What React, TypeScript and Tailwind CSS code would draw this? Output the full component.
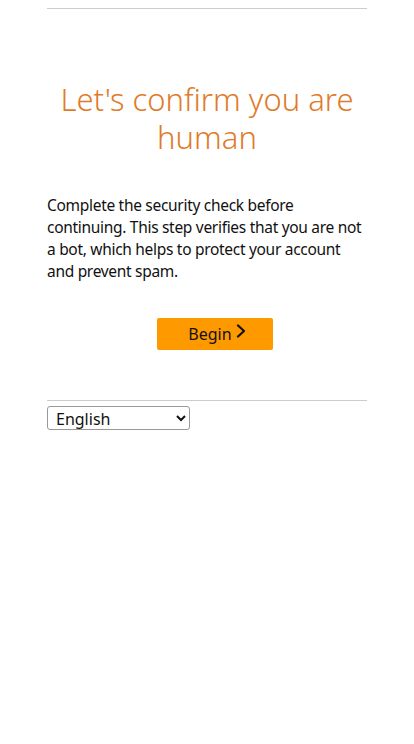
const App = () => {
  return (
    <div className="min-h-[744px] bg-white font-['Noto_Sans',sans-serif] text-[#111]">
      <div className="mx-auto w-[320px] pt-2">
        <hr className="border-t border-t-[#cccccc]" />
        <h1 className="mt-[71px] text-center text-[31px] font-light leading-[38px] text-[#e07b2a]">
          Let's confirm you are human
        </h1>
        <p className="mt-[38px] text-[15.5px] leading-[22px] tracking-[-0.3px]">
          Complete the security check before continuing. This step verifies that you are not a bot, which helps to protect your account and prevent spam.
        </p>
        <div className="mt-[36px] flex justify-center pl-[16px]">
          <button className="flex h-8 w-[116px] items-center justify-center rounded-[2px] bg-[#ff9900] pl-1 text-[16px] text-[#111]">
            Begin
            <svg width="10" height="14" viewBox="0 0 10 14" className="-mt-1.5 ml-1" fill="none" stroke="#111" strokeWidth="2.2" strokeLinecap="round" strokeLinejoin="round">
              <path d="M2 1.5 L8 7 L2 12.5" />
            </svg>
          </button>
        </div>
        <hr className="mt-[50px] border-t border-t-[#cccccc]" />
        <select className="mt-[5px] h-6 w-[143px] rounded-[3px] border border-[#999] bg-white pl-1 text-[16px]">
          <option>English</option>
        </select>
      </div>
    </div>
  )
}

export default App
